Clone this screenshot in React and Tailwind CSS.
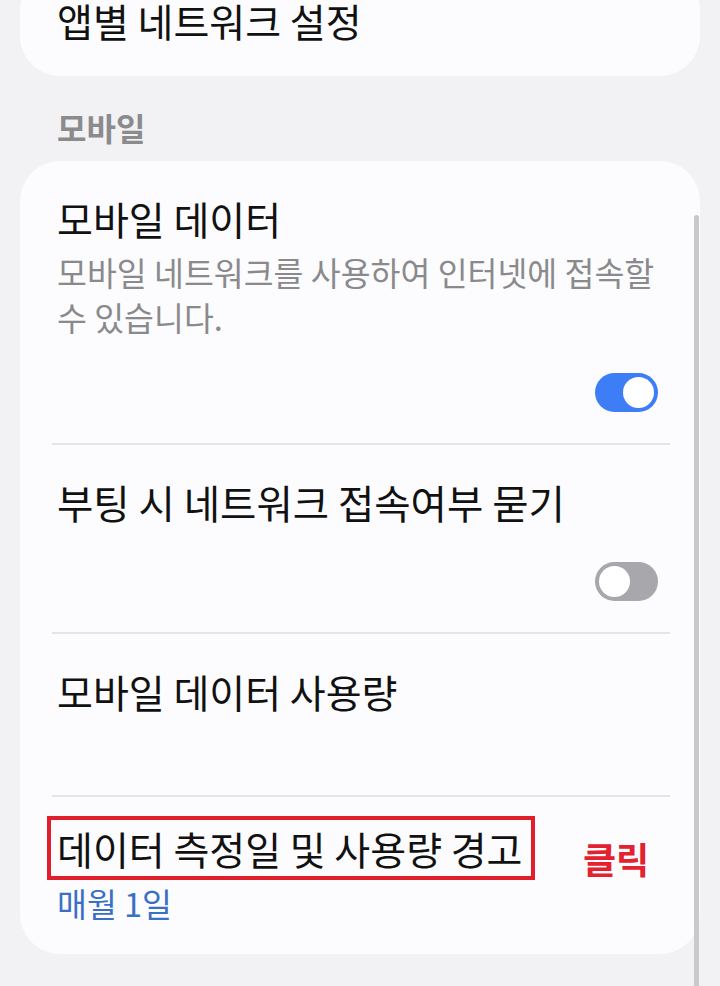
import React from "react";

const font = { fontFamily: '"Noto Sans CJK KR", "Noto Sans", sans-serif' };

function Toggle({ on }) {
  return (
    <div
      className={`w-[63px] h-[39px] rounded-full flex items-center px-[4px] ${
        on ? "bg-[#3d7ef6] justify-end" : "bg-[#a8a8ac] justify-start"
      }`}
    >
      <div className="w-[31px] h-[31px] rounded-full bg-white" />
    </div>
  );
}

function Divider() {
  return <div className="h-[2px] bg-[#e4e4e7] ml-[32px] mr-[30px]" />;
}

export default function App() {
  return (
    <div
      className="relative w-[720px] h-[986px] overflow-hidden bg-[#f2f2f4] text-[#111]"
      style={font}
    >
      <div className="mx-[20px] -mt-[30px] pt-[26px] pb-[32px] pl-[37px] rounded-[40px] bg-[#fcfcfe]">
        <div className="text-[39px] leading-[48px]">앱별 네트워크 설정</div>
      </div>

      <div className="mt-[31px] pl-[57px] text-[32px] leading-[40px] font-bold text-[#8b8b8e]">
        모바일
      </div>

      <div className="mx-[20px] mt-[14px] rounded-[40px] bg-[#fcfcfe]">
        <div className="pl-[37px] pr-[42px] pt-[33px] pb-[31px]">
          <div className="text-[39px] leading-[48px]">모바일 데이터</div>
          <div className="mt-[7px] text-[32.5px] leading-[45px] text-[#8a8a8c]">
            모바일 네트워크를 사용하여 인터넷에 접속할 수 있습니다.
          </div>
          <div className="mt-[34px] flex justify-end">
            <Toggle on />
          </div>
        </div>
        <Divider />
        <div className="pl-[37px] pr-[42px] pt-[33px] pb-[31px]">
          <div className="text-[39.5px] leading-[48px]">부팅 시 네트워크 접속여부 묻기</div>
          <div className="mt-[36px] flex justify-end">
            <Toggle />
          </div>
        </div>
        <Divider />
        <div className="pl-[37px] pr-[42px] pt-[33px] h-[161px]">
          <div className="text-[39px] leading-[48px]">모바일 데이터 사용량</div>
        </div>
        <Divider />
        <div className="pl-[37px] pr-[42px] pt-[27px] pb-[29px]">
          <div className="flex items-start">
            <div className="w-[526px] shrink-0">
              <span className="relative inline-block text-[39px] leading-[48px] whitespace-nowrap">
                데이터 측정일 및 사용량 경고
                <span className="absolute -left-[10px] -right-[12px] -top-[8px] -bottom-[8px] border-4 border-[#e01f2b]" />
              </span>
            </div>
            <span className="mt-[14px] text-[36px] leading-[40px] font-bold text-[#e3212f]">
              클릭
            </span>
          </div>
          <div className="mt-[2px] text-[32.5px] leading-[45px] text-[#3a6fc6]">매월 1일</div>
        </div>
      </div>

      <div className="absolute left-[694px] top-[215px] w-[5px] h-[771px] rounded-t-full bg-[#c9c9cb]" />
    </div>
  );
}
